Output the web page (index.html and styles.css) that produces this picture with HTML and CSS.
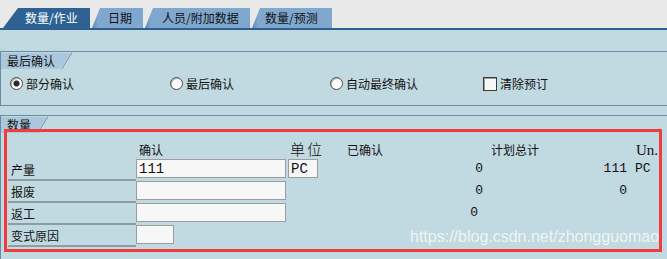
FILE: index.html
```html
<!DOCTYPE html>
<html lang="zh">
<head>
    <meta charset="UTF-8">
    <title>确认</title>
    <link rel="stylesheet" href="styles.css">
</head>
<body>

    <div class="tabstrip">
        <div class="tab active">数量/作业</div>
        <div class="tab">日期</div>
        <div class="tab">人员/附加数据</div>
        <div class="tab">数量/预测</div>
    </div>

    <div class="panel">
        <section class="group">
            <div class="group-title">最后确认</div>
            <div class="options">
                <label class="opt"><span class="radio on"></span>部分确认</label>
                <label class="opt"><span class="radio"></span>最后确认</label>
                <label class="opt"><span class="radio"></span>自动最终确认</label>
                <label class="opt"><span class="check"></span>清除预订</label>
            </div>
        </section>

        <section class="group group-last">
            <div class="group-title">数量</div>
            <div class="marked">
                <div class="qty-grid">
                    <div></div>
                    <div class="head head-input">确认</div>
                    <div class="head head-unit">单位</div>
                    <div class="head">已确认</div>
                    <div class="head head-total">计划总计</div>
                    <div class="head head-un">Un.</div>

                    <div class="lbl">产量</div>
                    <div class="cell"><span class="field wide">111</span></div>
                    <div class="cell"><span class="field unit">PC</span></div>
                    <div class="num">0</div>
                    <div class="num">111</div>
                    <div class="val un">PC</div>

                    <div class="lbl">报废</div>
                    <div class="cell"><span class="field wide"></span></div>
                    <div></div>
                    <div class="num">0</div>
                    <div class="num">0</div>
                    <div></div>

                    <div class="lbl">返工</div>
                    <div class="cell"><span class="field wide"></span></div>
                    <div></div>
                    <div class="num shift">0</div>
                    <div></div>
                    <div></div>

                    <div class="lbl">变式原因</div>
                    <div class="cell"><span class="field short"></span></div>
                    <div></div>
                    <div></div>
                    <div></div>
                    <div></div>
                </div>
            </div>
        </section>
    </div>

    <div class="watermark">https://blog.csdn.net/zhongguomao</div>

</body>
</html>
```

FILE: styles.css
```css
body {
    margin: 0;
    padding: 0;
    width: 667px;
    height: 259px;
    overflow: hidden;
    position: relative;
    font-family: "Noto Sans CJK SC", "Liberation Sans", sans-serif;
    font-size: 12px;
    color: #111;
    background: #c1d9e0;
}

/* Tab strip */
.tabstrip {
    display: flex;
    gap: 2px;
    height: 30px;
    box-sizing: border-box;
    padding: 8px 0 0 3px;
    background: #e9e9e9;
    border-bottom: 2px solid #2d6090;
}

.tab {
    height: 20px;
    line-height: 20px;
    box-sizing: border-box;
    background: linear-gradient(to right, #5f88b0 0, #80a8cf 6px);
    clip-path: polygon(8px 0, 100% 0, 100% 100%, 0 100%);
    white-space: nowrap;
}

.tab:nth-child(1) { width: 87px; padding-left: 22px; }
.tab:nth-child(2) { width: 51px; padding-left: 16px; }
.tab:nth-child(3) { width: 105px; padding-left: 17px; }
.tab:nth-child(4) { width: 80px; padding-left: 13px; }

.tab.active {
    background: #2e6293;
    color: #fff;
    clip-path: polygon(15px 0, 100% 0, 100% 100%, 0 100%);
}

/* Group boxes */
.group {
    margin-top: 21px;
    border-top: 1px solid #6b8aa5;
    border-left: 1px solid #6b8aa5;
    border-bottom: 1px solid #6b8aa5;
    height: 55px;
    box-sizing: border-box;
}

.group-last {
    margin-top: 9px;
    height: auto;
    border-bottom: none;
    padding-bottom: 10px;
}

.group-title {
    display: inline-block;
    position: relative;
    height: 16px;
    line-height: 16px;
    padding: 0 7px 0 6px;
    background: #aac7dc;
}

.group-title::after {
    content: "";
    position: absolute;
    top: 0;
    right: -10px;
    width: 10px;
    height: 16px;
    background: linear-gradient(to bottom right, #aac7dc calc(50% - 0.6px), #6b8aa5 50%, transparent calc(50% + 0.6px));
}

.options {
    display: grid;
    grid-template-columns: 160px 160px 153px auto;
    padding: 8px 0 0 9px;
}

.opt {
    display: flex;
    align-items: center;
    gap: 3px;
    height: 13px;
    line-height: 13px;
}

.radio {
    width: 11px;
    height: 11px;
    border: 1px solid #4a4a4a;
    border-radius: 50%;
    background: #fdfdfd;
    box-shadow: inset 1px 1px 0 #b5b5b5;
}

.radio.on {
    background: radial-gradient(circle, #2a2a2a 0 2.6px, #8a8a8a 3px, #fdfdfd 3.6px);
}

.check {
    width: 12px;
    height: 12px;
    border: 1px solid #3c3c3c;
    background: #f7f7f7;
    box-shadow: inset 1px 1px 0 #9a9a9a;
}

/* Red marked area */
.marked {
    position: relative;
    margin: -4px 5px 0 3px;
    border: 3px solid #f03c3e;
    padding: 0 0 2px 1px;
}

.qty-grid {
    display: grid;
    grid-template-columns: 128px 152px 59px 136px 144px 1fr;
    grid-auto-rows: 22px;
    grid-template-rows: 27px;
}

.head {
    padding-top: 9px;
    line-height: 18px;
    white-space: nowrap;
}

.head-input { padding-left: 3px; }

.head-unit {
    padding-left: 2px;
    padding-top: 8px;
    font-size: 15px;
    letter-spacing: 2px;
    font-weight: 300;
}

.head-total { padding-left: 8px; }

.head-un {
    padding-left: 9px;
    font-family: "Liberation Serif", serif;
    font-size: 15px;
}

.lbl {
    padding-left: 3px;
    line-height: 21px;
    border-bottom: 2px solid #8d9da4;
}

.cell {
    display: flex;
    align-items: flex-start;
}

.field {
    display: block;
    height: 19px;
    line-height: 19px;
    box-sizing: border-box;
    padding-left: 2px;
    border: 1px solid #9c9c9c;
    background: #f7f7f7;
    font-family: "Liberation Mono", monospace;
    font-size: 14px;
}

.field.wide { width: 150px; }
.field.unit { width: 30px; }
.field.short { width: 38px; }

.num, .val {
    line-height: 20px;
    font-family: "Liberation Mono", monospace;
    font-size: 13px;
}

.num { text-align: right; }
.num.shift { padding-right: 5px; }
.un { padding-left: 8px; }

.watermark {
    position: absolute;
    left: 410px;
    top: 228px;
    font-family: "Liberation Sans", sans-serif;
    font-size: 16px;
    line-height: 18px;
    color: rgba(255, 255, 255, 0.75);
}
```
